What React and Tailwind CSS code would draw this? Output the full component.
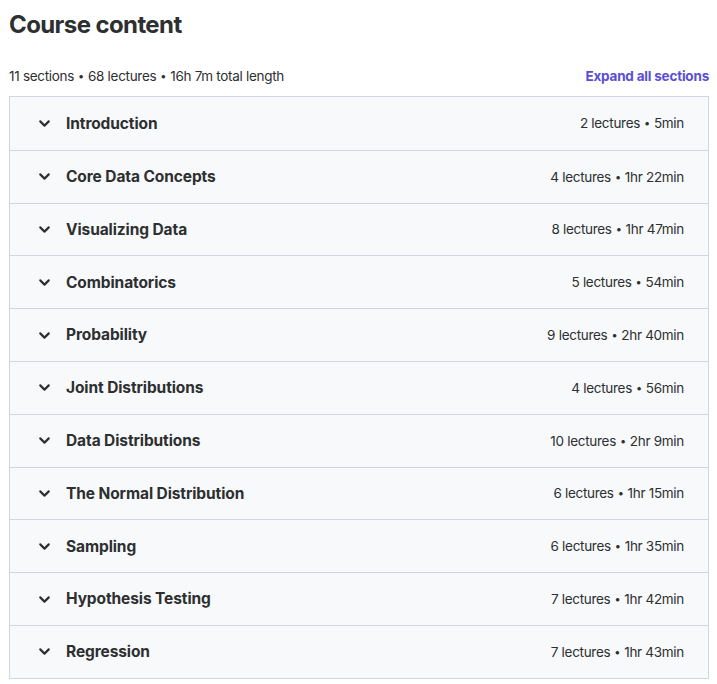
import { ChevronDown } from "lucide-react";

const sections = [
  ["Introduction", "2 lectures • 5min"],
  ["Core Data Concepts", "4 lectures • 1hr 22min"],
  ["Visualizing Data", "8 lectures • 1hr 47min"],
  ["Combinatorics", "5 lectures • 54min"],
  ["Probability", "9 lectures • 2hr 40min"],
  ["Joint Distributions", "4 lectures • 56min"],
  ["Data Distributions", "10 lectures • 2hr 9min"],
  ["The Normal Distribution", "6 lectures • 1hr 15min"],
  ["Sampling", "6 lectures • 1hr 35min"],
  ["Hypothesis Testing", "7 lectures • 1hr 42min"],
  ["Regression", "7 lectures • 1hr 43min"],
];

const Meta = ({ text }) => {
  const parts = text.split(" • ");
  return (
    <span>
      {parts[0]}
      <span className="mx-[4px] text-[11px] align-[1px]">•</span>
      {parts[1]}
    </span>
  );
};

const App = () => {
  return (
    <div className="min-h-screen bg-white pl-[9px] pr-[8px] pt-[10px] text-[#2d2f31] font-['Inter',sans-serif]">
      {/* Header */}
      <h1 className="text-[24px] font-bold leading-[30px] tracking-[-0.6px]">
        Course content
      </h1>

      <div className="mt-[27px] mb-[11px] flex items-end justify-between">
        <div className="text-[13.5px] leading-[18px] tracking-[-0.3px]">
          11 sections
          <span className="mx-[4px] text-[11px] align-[1px]">•</span>
          68 lectures
          <span className="mx-[4px] text-[11px] align-[1px]">•</span>
          16h 7m total length
        </div>
        <button className="text-[13.5px] font-bold leading-[18px] tracking-[-0.2px] text-[#5a4fd4]">
          Expand all sections
        </button>
      </div>

      {/* Sections */}
      <div className="border border-[#d1d7dc]">
        {sections.map(([title, meta], i) => (
          <div
            key={i}
            className={`flex h-[52.8px] items-center bg-[#f7f9fa] pl-[26px] pr-[24px] ${
              i > 0 ? "border-t border-[#d1d7dc]" : ""
            }`}
          >
            <ChevronDown size={17} strokeWidth={3} className="text-[#2d2f31]" />
            <div className="ml-[13px] flex-1 text-[15.5px] font-bold tracking-[-0.1px]">{title}</div>
            <div className="text-[13.5px] tracking-[-0.3px]">
              <Meta text={meta} />
            </div>
          </div>
        ))}
      </div>
    </div>
  );
};

export default App;
